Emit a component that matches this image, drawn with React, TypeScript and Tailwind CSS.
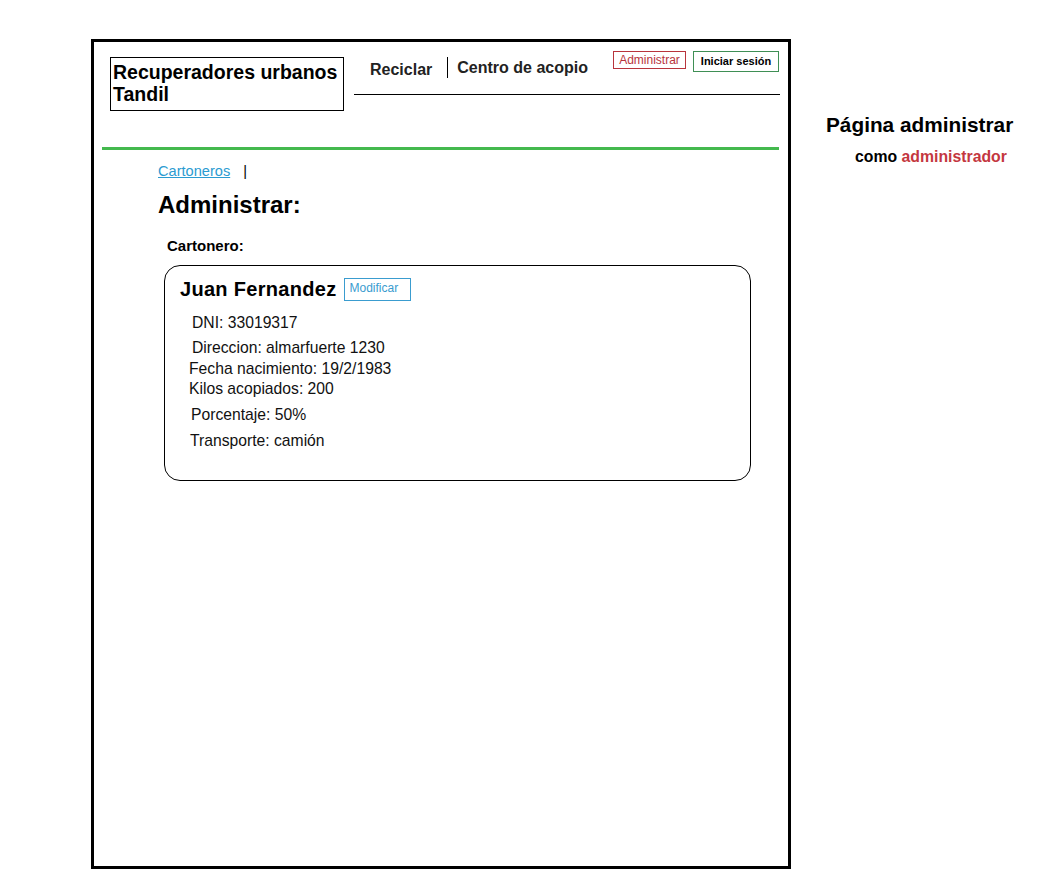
export default function App() {
  return (
    <div className="min-h-screen bg-white flex items-start pt-[39px] pl-[91px] font-['Liberation_Sans',Arial,sans-serif] text-black">
      <div className="w-[700px] h-[830px] shrink-0 border-[3px] border-black">
        <header className="flex items-start pt-[9px] pl-[16px]">
          <div className="mt-[6px] w-[234px] h-[54px] border border-black pl-[2px] pt-[3px] text-[19.5px] leading-[22px] font-bold">
            Recuperadores urbanos
            <br />
            Tandil
          </div>

          <nav className="ml-[10px] w-[426px] h-[44px] border-b border-black flex items-start pl-[16px]">
            <span className="mt-[9px] text-[16px] leading-[20px] font-bold text-[#222]">
              Reciclar
            </span>
            <span className="ml-[15px] mt-[6px] w-px h-[21px] bg-black" />
            <span className="ml-[9px] mt-[7px] text-[16px] leading-[20px] font-bold text-[#222]">
              Centro de acopio
            </span>

            <div className="ml-auto mr-[1px] flex items-start gap-[7px]">
              <button className="w-[73px] h-[18px] border border-[#b8343c] text-[#b8343c] text-[12px] leading-[16px] text-center">
                Administrar
              </button>
              <button className="w-[86px] h-[21px] border border-[#3f8f55] text-[11px] leading-[17px] font-bold text-center">
                Iniciar sesión
              </button>
            </div>
          </nav>
        </header>

        <div className="mt-[36px] ml-[8px] mr-[9px] h-[3px] bg-[#44b94e]" />

        <main className="pl-[64px]">
          <div className="mt-[12px] flex items-center text-[14.6px] leading-[18px]">
            <a href="#" className="text-[#2b9bd1] underline">
              Cartoneros
            </a>
            <span className="ml-[13px]">|</span>
          </div>

          <h2 className="mt-[11px] text-[24px] leading-[28px] font-bold">
            Administrar:
          </h2>

          <h3 className="mt-[18px] ml-[9px] text-[15px] leading-[18px] font-bold">
            Cartonero:
          </h3>

          <section className="mt-[10px] ml-[6px] w-[587px] border border-black rounded-[16px] pt-[11px] pl-[15px] pb-[29px]">
            <div className="flex items-center h-[24px]">
              <span className="text-[20px] leading-[24px] font-bold tracking-[0.3px]">
                Juan Fernandez
              </span>
              <button className="ml-[8px] w-[67px] h-[23px] border border-[#3a9ccf] text-[#3a9ccf] text-[12px] leading-[16px] text-left pl-[4px] pb-[3px]">
                Modificar
              </button>
            </div>

            <div className="mt-[12px] text-[15.7px] leading-[20px] text-[#111]">
              <p className="ml-[12px]">DNI: 33019317</p>
              <p className="ml-[12px] mt-[5px]">Direccion: almarfuerte 1230</p>
              <p className="ml-[9px] mt-[1px]">Fecha nacimiento: 19/2/1983</p>
              <p className="ml-[9px]">Kilos acopiados: 200</p>
              <p className="ml-[11px] mt-[6px]">Porcentaje: 50%</p>
              <p className="ml-[10px] mt-[6px]">Transporte: camión</p>
            </div>
          </section>
        </main>
      </div>

      <aside className="ml-[35px] mt-[74px]">
        <p className="text-[20.8px] leading-[24px] font-bold">Página administrar</p>
        <p className="mt-[10px] pl-[29px] text-[15.8px] leading-[20px] font-bold">
          como <span className="text-[#c4373f]">administrador</span>
        </p>
      </aside>
    </div>
  );
}
